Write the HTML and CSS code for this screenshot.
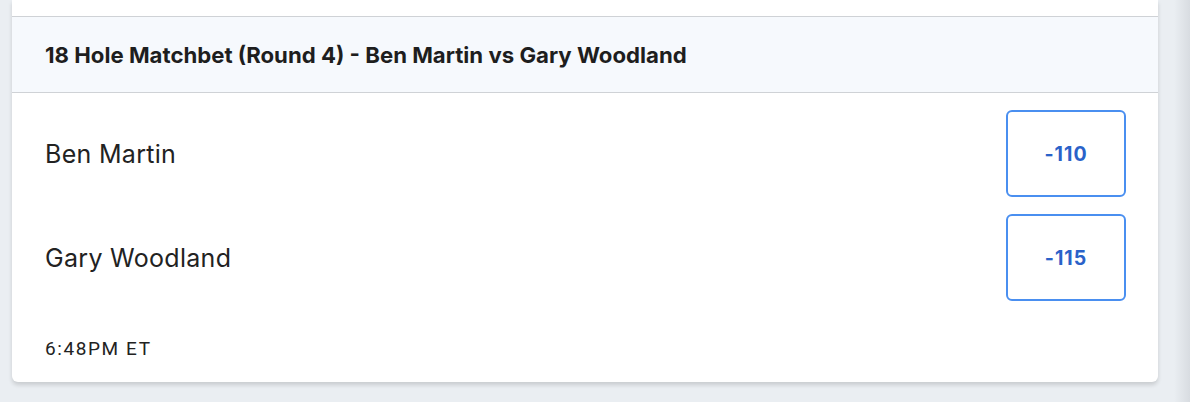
FILE: index.html
```html
<!DOCTYPE html>
<html lang="en">
<head>
    <meta charset="UTF-8">
    <meta name="viewport" content="width=device-width, initial-scale=1.0">
    <title>Matchbet</title>
    <link rel="stylesheet" href="styles.css">
</head>
<body>

    <div class="page">
        <div class="card">
            <div class="card-top"></div>
            <div class="market-header">
                <h2>18 Hole Matchbet (Round 4) - Ben Martin vs Gary Woodland</h2>
            </div>
            <div class="outcomes">
                <div class="outcome">
                    <span class="player">Ben Martin</span>
                    <button class="odds">-110</button>
                </div>
                <div class="outcome">
                    <span class="player">Gary Woodland</span>
                    <button class="odds">-115</button>
                </div>
            </div>
            <div class="start-time">6:48PM ET</div>
        </div>
        <div class="edge"></div>
    </div>

</body>
</html>
```

FILE: styles.css
```css
body {
    font-family: Inter, "Open Sans", Arial, sans-serif;
    margin: 0;
    padding: 0;
    background-color: #eaeef2;
    color: #222;
    overflow: hidden;
}
.page {
    display: flex;
    height: 402px;
    padding-left: 12px;
}
.card {
    width: 1146px;
    height: 382px;
    background-color: white;
    border-radius: 0 0 6px 6px;
    box-shadow: 0 3px 4px rgba(0, 0, 0, 0.14);
    display: flex;
    flex-direction: column;
}
.card-top {
    height: 16px;
}
.market-header {
    height: 75px;
    display: flex;
    align-items: center;
    padding: 0 33px;
    background-color: #f6f9fd;
    border-top: 1px solid #cfd2d6;
    border-bottom: 1px solid #cfd2d6;
}
.market-header h2 {
    margin: 0;
    font-size: 22.2px;
    font-weight: 700;
    color: #1e1e1e;
}
.outcomes {
    display: flex;
    flex-direction: column;
    gap: 17px;
    padding: 17px 32px 0 33px;
}
.outcome {
    display: flex;
    align-items: center;
    justify-content: space-between;
    height: 87px;
}
.player {
    font-size: 25px;
    letter-spacing: 0.3px;
    color: #222;
}
.odds {
    width: 120px;
    height: 87px;
    background: white;
    border: 2px solid #4a8ff0;
    border-radius: 6px;
    color: #2a62c9;
    font-family: Inter, Arial, sans-serif;
    font-size: 19.5px;
    font-weight: 700;
    letter-spacing: 1px;
    cursor: pointer;
}
.start-time {
    padding: 38px 33px 0;
    font-family: Roboto, Arial, sans-serif;
    font-size: 19px;
    line-height: 20px;
    letter-spacing: 1.6px;
    color: #222;
}
.edge {
    margin-left: auto;
    width: 16px;
    background: linear-gradient(to right, #eaeef2, #d8dce1);
}
```
